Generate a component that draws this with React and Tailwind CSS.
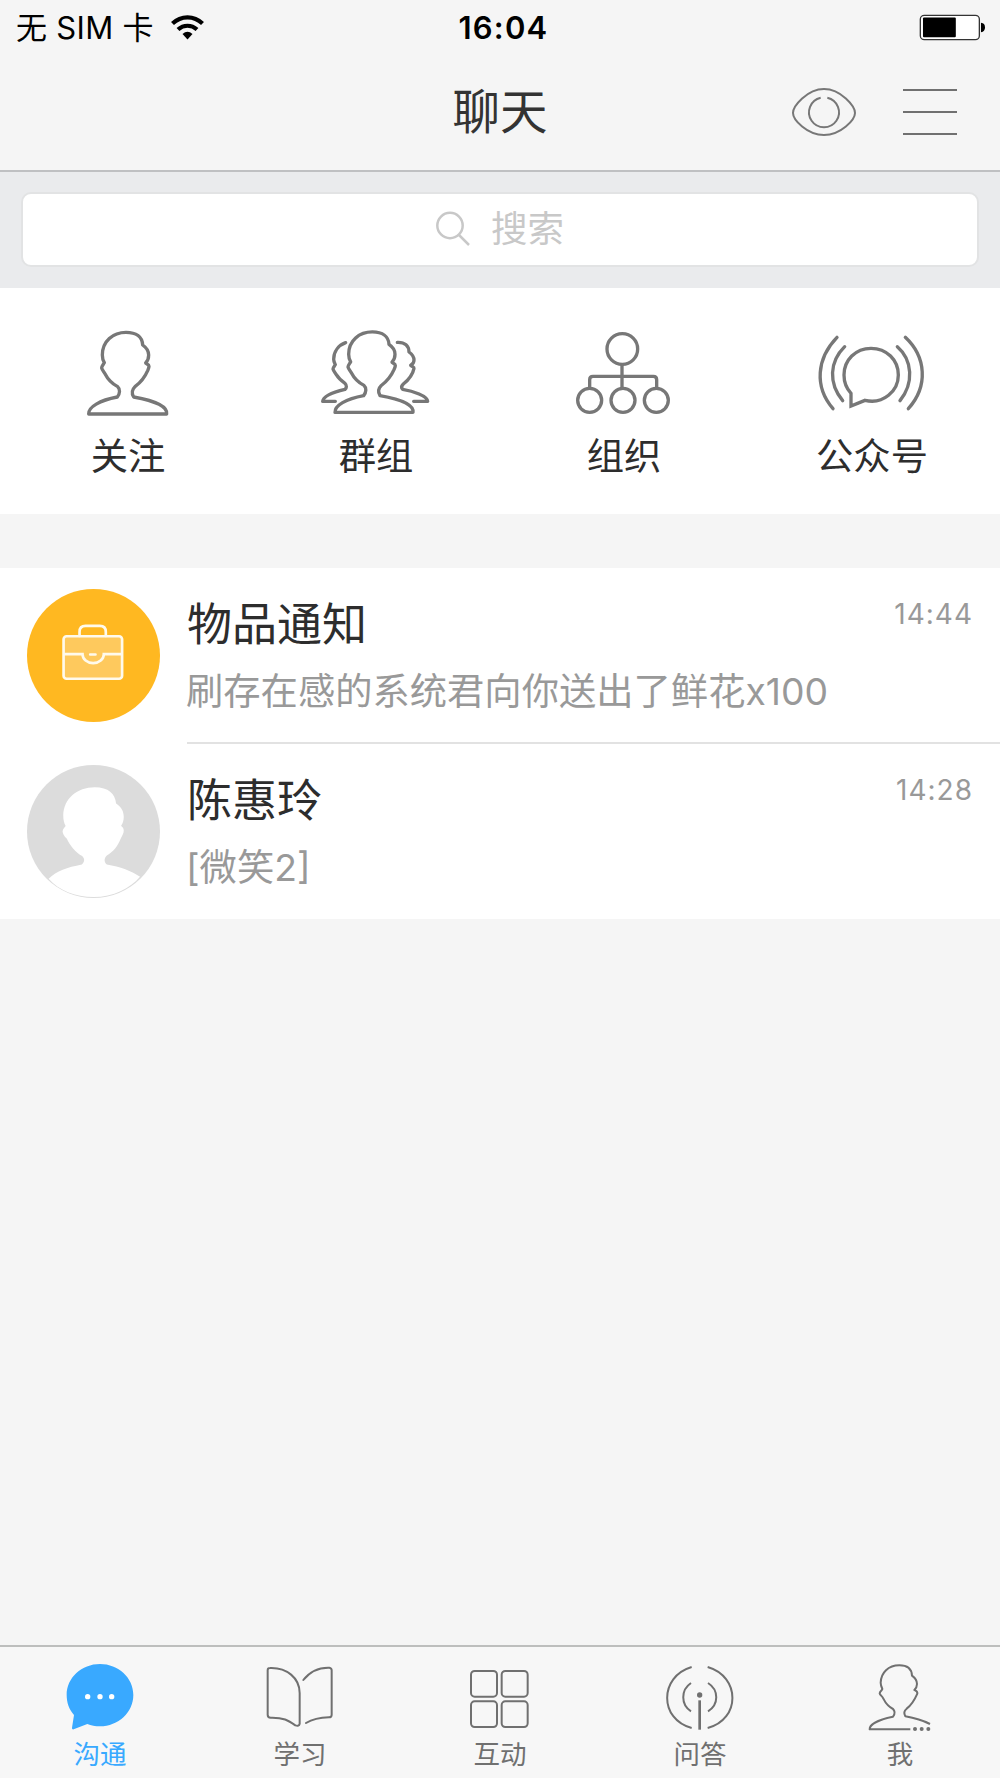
import React, { useState } from 'react'

const HEAD_PATH =
    'M87 311H321C324 290 290 272 222 260C216 250 215 240 226 229C245 215 258 195 264 181C266 176 268 172 268 168C268 162 258 160 258 158C264 152 267 145 267 134C267 120 262 113 249 104C248 80 230 66 199 66C160 66 128 92 128 134C128 145 131 152 134 157C130 164 126 168 126 173C127 179 133 184 136 190C145 208 158 220 174 229C182 236 181 250 173 260C120 270 86 290 87 311Z'

// All icons are drawn on a 3x grid
const Icon = ({ box, className, width = 10, children }) => (
    <svg
        viewBox={box}
        className={className}
        fill="none"
        stroke="currentColor"
        strokeWidth={width}
        strokeLinecap="round"
        strokeLinejoin="round"
    >
        {children}
    </svg>
)

const FollowIcon = () => (
    <Icon box="55 50 300 276" className="w-[100px] h-[92px]">
        <path d={HEAD_PATH} />
    </Icon>
)

const GroupIcon = () => (
    <Icon box="774 51 348 276" className="w-[116px] h-[92px]">
        <path transform="translate(738 1) scale(1 .984)" d={HEAD_PATH} />
        <path d="M857 98C835 106 821 125 821 148C821 155 824 160 826 164C822 170 819 173 819 177C820 183 826 188 829 194C836 206 845 213 855 220C861 226 860 234 855 238C820 246 790 258 788 274H826" />
        <path d="M1012 97C1035 96 1047 108 1047 126C1058 134 1062 142 1062 150C1062 158 1058 163 1052 166C1056 170 1063 171 1062 175C1058 195 1045 210 1030 222C1024 228 1024 234 1028 238C1060 243 1102 258 1103 274H1061" />
    </Icon>
)

const OrgIcon = () => (
    <Icon box="102 51 300 276" className="w-[100px] h-[92px]" width={10}>
        <circle cx="247" cy="117" r="46" />
        <path strokeLinecap="butt" d="M246 163V235M149 233V209Q149 199 159 199H340Q350 199 350 209V233" />
        <circle cx="149" cy="271" r="36" />
        <circle cx="249" cy="271" r="36" />
        <circle cx="349" cy="271" r="36" />
    </Icon>
)

const OfficialIcon = () => (
    <Icon box="822 51 348 276" className="w-[116px] h-[92px]">
        <path strokeLinejoin="miter" d="M933 250V288L975 271C1030 284 1075 243 1075 195C1075 150 1040 115 993 115C947 115 912 150 912 195C912 217 920 236 933 250Z" />
        <path d="M891 82C830 145 822 230 879 296M914 110C868 155 865 220 908 272M1072 110C1118 150 1122 220 1080 272M1096 82C1158 140 1166 228 1105 296" />
    </Icon>
)

const TalkIcon = () => (
    <svg viewBox="195 89 210 216" className="w-[70px] h-[72px]" fill="#39a9ff">
        <path d="M200 194C200 142 245 101 300 101C355 101 400 142 400 194C400 246 355 288 300 288C286 288 273 285 262 281L221 297Q215 298 216 292L222 254C207 237 200 217 200 194Z" />
        <g fill="#fff">
            <circle cx="263" cy="199" r="8" />
            <circle cx="300" cy="199" r="8" />
            <circle cx="335" cy="199" r="8" />
        </g>
    </svg>
)

const StudyIcon = () => (
    <Icon box="795 91 210 216" className="w-[70px] h-[72px]" width={6}>
        <path d="M803 122Q803 115 810 115C860 113 899 145 899 190V282Q897 291 886 287C865 272 850 263 812 264Q803 264 803 255Z" />
        <path d="M910 151C930 125 955 113 988 114Q995 115 995 122V255Q995 263 987 263C955 264 935 270 918 280" />
    </Icon>
)

const InteractIcon = () => (
    <Icon box="196 90 210 216" className="w-[70px] h-[72px]" width={6}>
        <rect x="214" y="123" width="78" height="77" rx="11" />
        <rect x="306" y="123" width="78" height="77" rx="11" />
        <rect x="214" y="214" width="78" height="77" rx="11" />
        <rect x="306" y="214" width="78" height="77" rx="11" />
    </Icon>
)

const AnswerIcon = () => (
    <Icon box="795 90 210 216" className="w-[70px] h-[72px]" width={6}>
        <path strokeLinecap="butt" d="M875 111C777 140 777 268 875 294M923 111C1022 140 1022 268 923 294" />
        <path strokeLinecap="butt" d="M873 159C842 180 842 224 873 244M924 159C957 180 957 224 924 244" />
        <path strokeLinecap="butt" strokeWidth="8" d="M899 211V299" />
        <circle cx="899" cy="195" r="8" fill="currentColor" stroke="none" />
    </Icon>
)

const MeIcon = () => (
    <Icon box="375 90 210 216" className="w-[70px] h-[72px]" width={6}>
        <path strokeLinecap="butt" d="M511 298H389C388 282 420 268 459 260C465 252 466 244 459 237C445 230 436 218 430 206C428 199 420 196 419 190C420 183 426 182 427 177C423 168 422 165 422 158C423 128 445 106 478 106C502 106 515 118 516 137C527 145 531 150 531 162C531 170 528 175 523 180C528 183 533 184 532 191C525 207 518 223 500 236C491 243 491 250 496 259C530 265 550 272 570 282" />
        <g fill="currentColor" stroke="none">
            <circle cx="525" cy="297" r="6" />
            <circle cx="545" cy="297" r="6" />
            <circle cx="565" cy="297" r="6" />
        </g>
    </Icon>
)

const BriefcaseAvatar = () => (
    <svg viewBox="80 87 400 400" className="w-[133px] h-[133px] shrink-0" fill="none">
        <circle cx="280" cy="287" r="200" fill="#ffb821" />
        <g stroke="#fffaec" strokeWidth="8" strokeLinecap="round">
            <rect x="190" y="229" width="176" height="128" rx="9" fill="#fec95d" />
            <path d="M238 228V216Q238 198 256 198H299Q317 198 317 216V228" />
            <path d="M192 283H247A32 27 0 0 0 311 283H364M270 284H286" />
        </g>
    </svg>
)

const UserAvatar = () => (
    <svg viewBox="80 614 400 400" className="w-[133px] h-[133px] shrink-0">
        <circle cx="280" cy="814" r="200" fill="#dcdcdc" />
        <path
            fill="#fff"
            d="M145 956C170 932 200 922 245 913C253 907 255 897 246 888C228 880 208 855 200 836C192 828 187 820 187 813C188 805 196 800 196 797C192 790 189 780 189 765C191 715 230 681 284 681C325 681 345 700 348 730C365 741 371 755 371 770C371 782 368 790 363 797C366 801 371 803 371 811C371 820 366 827 362 835C353 858 340 875 320 886C310 896 313 908 320 913C360 920 395 932 420 950C390 985 340 1011 280 1011C225 1011 175 990 145 956Z"
        />
    </svg>
)

const shortcuts = [
    { label: '关注', icon: FollowIcon },
    { label: '群组', icon: GroupIcon },
    { label: '组织', icon: OrgIcon },
    { label: '公众号', icon: OfficialIcon },
]

const chats = [
    { name: '物品通知', message: '刷存在感的系统君向你送出了鲜花x100', time: '14:44', avatar: BriefcaseAvatar },
    { name: '陈惠玲', message: '[微笑2]', time: '14:28', avatar: UserAvatar },
]

const tabs = [
    { label: '沟通', icon: TalkIcon },
    { label: '学习', icon: StudyIcon },
    { label: '互动', icon: InteractIcon },
    { label: '问答', icon: AnswerIcon },
    { label: '我', icon: MeIcon },
]

const StatusBar = () => (
    <div className="grid grid-cols-3 items-center h-[54px] pl-4 pr-[14px] text-black text-[31px] leading-[54px]">
        <div className="flex items-center gap-[17px]">
            <span className="whitespace-pre tracking-[0.3px] pt-px">无 SIM 卡</span>
            <svg viewBox="0 0 33 25" className="w-[33px] h-[25px]" fill="none" stroke="#000" strokeWidth="4.2">
                <path d="M1.5 8.5C10 .2 23 .2 31.500 8.500M7 14.500C12.500 9.500 20.500 9.500 26 14.500" />
                <path d="M11.500 19Q16.500 14.500 21.500 19L16.500 24.500Z" fill="#000" stroke="none" />
            </svg>
        </div>
        <span className="text-center font-semibold tracking-[1.2px] pl-[5px] pt-px">16:04</span>
        <svg viewBox="656 41 202 81" className="w-[67px] h-[27px] justify-self-end">
            <rect x="660" y="45" width="178" height="73" rx="12" fill="#fff" stroke="#333" strokeWidth="4" />
            <rect x="668" y="51" width="99" height="60" rx="3" />
            <path d="M843 67Q855 68 855 81Q855 95 843 96Z" />
        </svg>
    </div>
)

const Header = () => (
    <header className="bg-[#f5f5f5] border-b-2 border-[#bfc0c2] h-[172px]">
        <StatusBar />
        <div className="grid grid-cols-[1fr_auto_1fr] items-center h-[115px] px-[43px] text-[#777]">
            <span />
            <h1 className="text-[47.5px] leading-[112px] text-[#333] font-normal">聊天</h1>
            <div className="flex items-center justify-end gap-[46px]">
                <Icon box="272 260 198 150" className="w-[66px] h-[50px]" width={6}>
                    <path d="M278 338C278 318 320 266 371 266C422 266 464 318 464 338C464 358 422 404 371 404C320 404 278 358 278 338Z" />
                    <path strokeLinecap="butt" d="M361 292A45 45 0 1 0 381 292" />
                </Icon>
                <div className="flex flex-col justify-between w-[54px] h-[46px]">
                    <i className="h-0.5 bg-[#707070]" />
                    <i className="h-0.5 bg-[#707070]" />
                    <i className="h-0.5 bg-[#707070]" />
                </div>
            </div>
        </div>
    </header>
)

const SearchBar = () => (
    <div className="bg-[#eaebed] h-[116px] px-[21px] pt-5">
        <div className="flex items-center justify-center gap-[21px] h-[75px] pb-[2px] bg-white border-2 border-[#e2e3e4] rounded-[10px] text-[#c8c8c8]">
            <svg viewBox="0 0 34 35" className="w-[34px] h-[35px]" fill="none" stroke="currentColor" strokeWidth="2.500">
                <circle cx="14" cy="14.500" r="12.700" />
                <path d="M23 24L33 34" />
            </svg>
            <span className="text-[36.500px] leading-[70px] font-normal">搜索</span>
        </div>
    </div>
)

const ChatRow = ({ chat, last }) => {
    const Avatar = chat.avatar
    return (
        <li className="flex h-[176px] pl-[26.5px] gap-[27.5px]">
            <div className="pt-[21px]">
                <Avatar />
            </div>
            <div className={`flex-1 flex justify-between pr-[27px] ${last ? '' : 'border-b-2 border-[#e2e2e2]'}`}>
                <div className="pt-[27px]">
                    <h2 className="text-[45px] leading-[60px] text-[#2d2d2d] font-normal">{chat.name}</h2>
                    <p className="mt-[12px] -ml-px text-[37.300px] leading-[50px] text-[#999] font-normal">{chat.message}</p>
                </div>
                <time className="pt-[28px] text-[28px] leading-[36px] text-[#999] tracking-[1px]">{chat.time}</time>
            </div>
        </li>
    )
}

const App = () => {
    const [active, setActive] = useState(0)

    return (
        <div className="flex flex-col w-[1000px] h-[1778px] bg-[#f5f5f5] overflow-hidden font-[Inter,'Noto_Sans_CJK_SC',sans-serif]">
            <Header />
            <SearchBar />

            <nav className="grid grid-cols-4 h-[226px] px-1 pt-[39px] bg-white">
                {shortcuts.map(({ label, icon: ShortcutIcon }) => (
                    <a key={label} className="flex flex-col items-center text-[#777]">
                        <ShortcutIcon />
                        <span className="mt-[11px] text-[37.300px] leading-[54px] text-[#2d2d2d] font-normal">{label}</span>
                    </a>
                ))}
            </nav>

            <ul className="mt-[54px] h-[351px] bg-white">
                {chats.map((chat, i) => (
                    <ChatRow key={chat.name} chat={chat} last={i === chats.length - 1} />
                ))}
            </ul>

            {/* Bottom tab bar */}
            <footer className="mt-auto grid grid-cols-5 h-[133px] border-t-2 border-[#bdbebd] bg-[#f7f7f7]">
                {tabs.map(({ label, icon: TabIcon }, i) => (
                    <button
                        key={label}
                        onClick={() => setActive(i)}
                        className={`flex flex-col items-center pt-[13px] ${i === active ? 'text-[#39a9ff]' : 'text-[#707070]'}`}
                    >
                        <TabIcon />
                        <span className="mt-[3px] text-[26.500px] leading-[38px]">{label}</span>
                    </button>
                ))}
            </footer>
        </div>
    )
}

export default App
